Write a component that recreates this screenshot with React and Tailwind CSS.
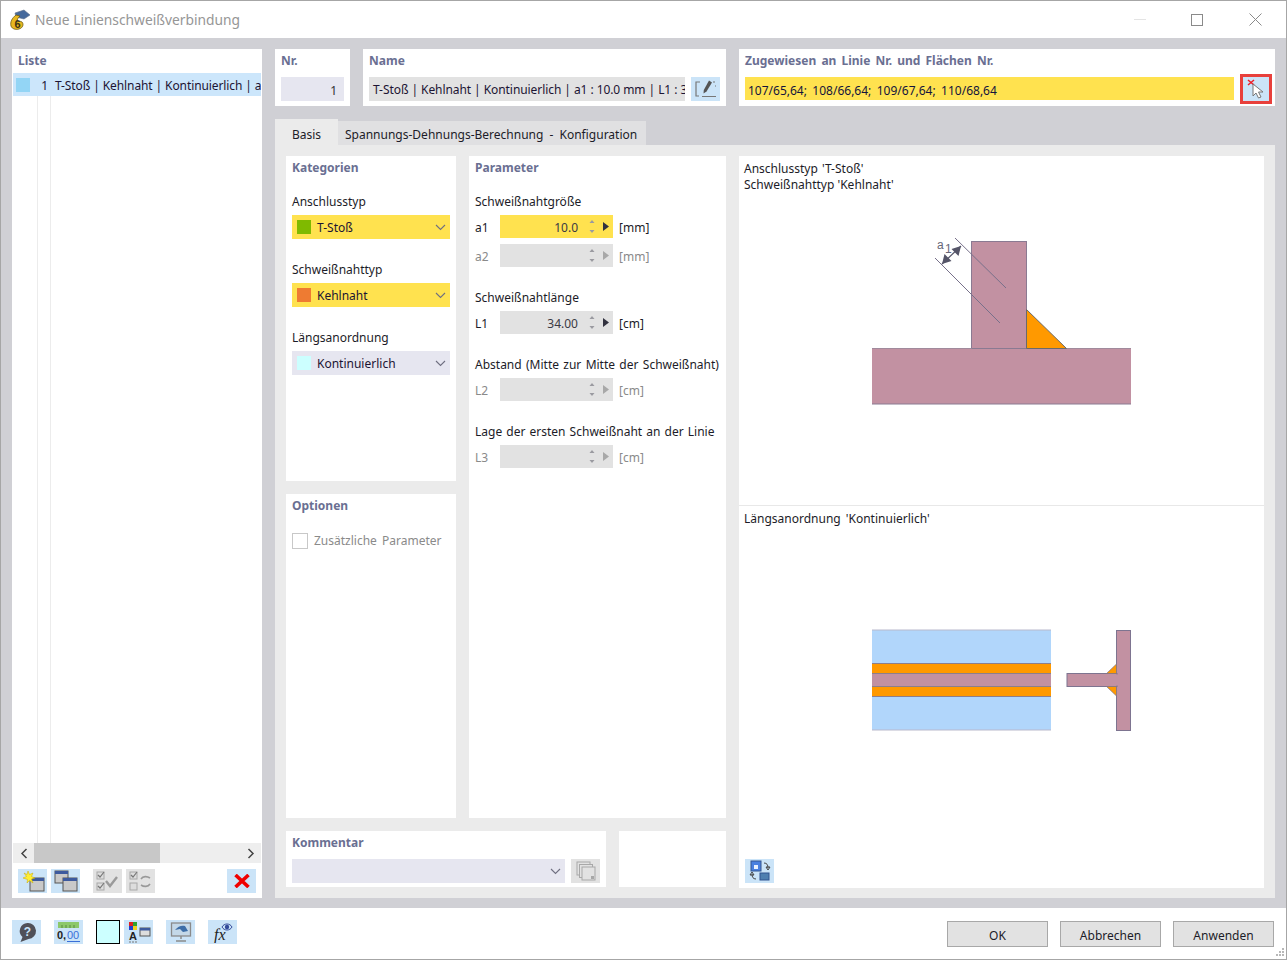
import React from 'react';

const font = { fontFamily: '"Noto Sans", sans-serif' };

function Chevron({ color = '#6f6f80' }) {
    return (
        <svg width="11" height="7" viewBox="0 0 11 7" className="shrink-0">
            <path d="M1 1l4.5 4.5L10 1" fill="none" stroke={color} strokeWidth="1.1" />
        </svg>
    );
}

function Heading({ children, className = '' }) {
    return <div className={`text-[12px] leading-[16px] font-bold text-[#6a6f92] ${className}`}>{children}</div>;
}

function IconButton({ bg = 'bg-[#cbe4f8]', className = '', children }) {
    return (
        <div className={`w-[29px] h-[24px] flex items-center justify-center shrink-0 ${bg} ${className}`}>
            {children}
        </div>
    );
}

function Select({ swatch, bg, children }) {
    return (
        <div className={`h-[24px] flex items-center pl-[5px] pr-[4px] ${bg}`}>
            <span className="w-[14px] h-[14px] shrink-0" style={{ background: swatch }} />
            <span className="ml-[6px] pt-[1px] flex-1 text-[12px] text-[#1c1433]">{children}</span>
            <Chevron />
        </div>
    );
}

function Spin({ label, value, unit, bg = 'bg-[#e2e2e2]', disabled = false }) {
    const col = disabled ? '#a8a8a8' : '#333340';
    return (
        <div className="h-[23px] flex items-center">
            <span className={`w-[25px] pt-[2px] text-[12px] ${disabled ? 'text-[#8a8a8a]' : 'text-[#1c1c28]'}`}>{label}</span>
            <div className={`w-[113px] h-[23px] flex items-center justify-end ${bg}`}>
                <span className="pt-[2px] text-[12px] text-[#3a3a44] mr-[10px]">{value}</span>
                <svg width="8" height="17" viewBox="0 0 8 17" className="mr-[7px]">
                    <path d="M4 2l2.500 3h-5z" fill="#9a9aa0" />
                    <path d="M4 15l2.500-3h-5z" fill="#9a9aa0" />
                </svg>
                <svg width="6" height="9" viewBox="0 0 6 9" className="mr-[4px]">
                    <path d="M0 0l6 4.500L0 9z" fill={col} />
                </svg>
            </div>
            <span className={`ml-[6px] pt-[2px] text-[12px] ${disabled ? 'text-[#8a8a8a]' : 'text-[#1c1c28]'}`}>{unit}</span>
        </div>
    );
}

function Window({ star, stack }) {
    return (
        <svg width="24" height="22" viewBox="0 0 24 22">
            {stack && (
                <g>
                    <rect x="1" y="1" width="13" height="12" fill="#c9c9c9" stroke="#555" />
                    <rect x="1" y="1" width="13" height="3" fill="#3d5a9e" />
                </g>
            )}
            <rect x="9" y="8" width="14" height="13" fill="#c9c9c9" stroke="#555" />
            <rect x="9" y="8" width="14" height="3" fill="#3d5a9e" />
            {star && <path d="M7 1l1.500 3.500L12 3l-1.500 3.500L14 8l-3.500 1L12 13 8.500 10.500 6 13l.5-3.500L2 8l3.500-1.500L3 3l3 1.500z" fill="#ffee33" stroke="#c8a800" strokeWidth=".5" />}
        </svg>
    );
}

function CheckGray({ second }) {
    return (
        <svg width="24" height="22" viewBox="0 0 24 22">
            <rect x="1" y="2" width="7" height="7" fill="#ddd" stroke="#a8a8a8" />
            <path d="M2 5l2 2 4-5" fill="none" stroke="#777" strokeWidth="1.200" />
            <rect x="1" y="13" width="7" height="7" fill="#ddd" stroke="#a8a8a8" />
            {second ? (
                <path d="M12 9c2-3 6-3 9-1M21 14c-2 3-6 3-9 1" fill="none" stroke="#999" strokeWidth="1.600" />
            ) : (
                <g>
                    <path d="M2 16l2 2 4-5" fill="none" stroke="#777" strokeWidth="1.200" />
                    <path d="M10 11l4 5 7-9" fill="none" stroke="#9a9a9a" strokeWidth="2.400" />
                </g>
            )}
        </svg>
    );
}

function LeftPanel() {
    return (
        <div className="w-[250px] h-[849px] bg-white flex flex-col pt-[4px]">
            <div className="px-[6px] h-[20px]"><Heading>Liste</Heading></div>
            <div className="mx-[1px] h-[23px] bg-[#cce6fb] flex items-center overflow-hidden whitespace-nowrap">
                <span className="ml-[3px] w-[14px] h-[14px] bg-[#93d5f5] shrink-0" />
                <span className="w-[18px] pt-[2px] text-right text-[12px] text-[#1c1433] shrink-0">1</span>
                <span className="ml-[7px] pt-[2px] text-[12px] tracking-[-0.1px] text-[#1c1433]">T-Stoß | Kehlnaht | Kontinuierlich | a1 : 10.0 mm</span>
            </div>
            <div className="flex-1 flex pl-[25px]">
                <div className="w-[14px] border-x border-[#ececec]" />
            </div>
            <div className="mx-[1px] h-[20px] bg-[#eeeeee] flex items-center">
                <div className="w-[21px] flex justify-center">
                    <svg width="8" height="11" viewBox="0 0 8 11"><path d="M6.500 1L2 5.500 6.500 10" fill="none" stroke="#444" strokeWidth="1.500" /></svg>
                </div>
                <div className="w-[126px] h-[20px] bg-[#c8c8c8]" />
                <div className="flex-1 flex justify-end pr-[6px]">
                    <svg width="8" height="11" viewBox="0 0 8 11"><path d="M1.500 1L6 5.500 1.500 10" fill="none" stroke="#444" strokeWidth="1.500" /></svg>
                </div>
            </div>
            <div className="h-[35px] flex items-start pt-[6px] pl-[6px]">
                <IconButton><Window star /></IconButton>
                <IconButton className="ml-[4px]"><Window stack /></IconButton>
                <IconButton bg="bg-[#e2e2e2]" className="ml-[13px]"><CheckGray /></IconButton>
                <IconButton bg="bg-[#e2e2e2]" className="ml-[4px]"><CheckGray second /></IconButton>
                <IconButton className="ml-[72px]">
                    <svg width="16" height="14" viewBox="0 0 16 14"><path d="M1.500 1l13 12M14.500 1l-13 12" stroke="#f00000" strokeWidth="3.600" /></svg>
                </IconButton>
            </div>
        </div>
    );
}

function TopRow() {
    return (
        <div className="h-[57px] flex gap-[13px]">
            <div className="w-[75px] bg-white px-[6px] pt-[4px]">
                <Heading>Nr.</Heading>
                <div className="mt-[8px] h-[24px] bg-[#e6e6f0] flex items-center justify-end pt-[3px] pr-[7px] text-[12px] text-[#333]">1</div>
            </div>
            <div className="w-[363px] bg-white px-[6px] pt-[4px]">
                <Heading>Name</Heading>
                <div className="mt-[8px] flex gap-[6px]">
                    <div className="w-[316px] h-[24px] bg-[#e2e2e2] flex items-center pt-[2px] pl-[4px] overflow-hidden whitespace-nowrap text-[12px] tracking-[-0.07px] text-[#1c1433]">
                        T-Stoß | Kehlnaht | Kontinuierlich | a1 : 10.0 mm | L1 : 34.00 cm
                    </div>
                    <IconButton>
                        <svg width="24" height="20" viewBox="0 0 24 20">
                            <path d="M6 3H2v14h3M8 17.500h14M21 3h-2M22 7h-1" fill="none" stroke="#777" strokeWidth="1.200" />
                            <path d="M15 1.500l3 2-5.500 9-3 2 .3-3.500z" fill="#555" />
                        </svg>
                    </IconButton>
                </div>
            </div>
            <div className="w-[536px] bg-white pl-[6px] pt-[4px] relative">
                <Heading className="[word-spacing:2px]">Zugewiesen an Linie Nr. und Flächen Nr.</Heading>
                <div className="mt-[8px] w-[489px] h-[23px] bg-[#ffe24f] flex items-center pt-[5px] pl-[3px] text-[12px] [word-spacing:2.3px] text-[#14143c]">
                    107/65,64; 108/66,64; 109/67,64; 110/68,64
                </div>
                <div className="absolute left-[501px] top-[25px] w-[32px] h-[30px] border-[3px] border-[#e8403c] bg-[#cbe4f8] flex items-center justify-center">
                    <svg width="18" height="22" viewBox="0 0 18 22">
                        <path d="M1 2l6 5M7 2L1 7" stroke="#ee1c25" strokeWidth="1.500" />
                        <path d="M6 6v12l3-3 2.500 5 2.500-1-2.500-5H16z" fill="#fff" stroke="#777" />
                    </svg>
                </div>
            </div>
        </div>
    );
}

function Kategorien() {
    return (
        <div className="h-[325px] bg-white px-[6px] pt-[4px]">
            <Heading>Kategorien</Heading>
            <div className="mt-[18px] text-[12px] leading-[16px] text-[#1c1c28]">Anschlusstyp</div>
            <div className="mt-[5px]"><Select swatch="#7fba00" bg="bg-[#ffe24f]">T-Stoß</Select></div>
            <div className="mt-[23px] text-[12px] leading-[16px] text-[#1c1c28]">Schweißnahttyp</div>
            <div className="mt-[5px]"><Select swatch="#ee7b32" bg="bg-[#ffe24f]">Kehlnaht</Select></div>
            <div className="mt-[23px] text-[12px] leading-[16px] text-[#1c1c28]">Längsanordnung</div>
            <div className="mt-[5px]"><Select swatch="#ccffff" bg="bg-[#e6e6f0]">Kontinuierlich</Select></div>
        </div>
    );
}

function Optionen() {
    return (
        <div className="h-[324px] bg-white px-[6px] pt-[4px]">
            <Heading>Optionen</Heading>
            <div className="mt-[17px] flex items-center">
                <span className="w-[16px] h-[16px] border border-[#c8c8c8] bg-white" />
                <span className="ml-[6px] pt-[1px] text-[12px] [word-spacing:2px] text-[#8a8a8a]">Zusätzliche Parameter</span>
            </div>
        </div>
    );
}

function Parameter() {
    return (
        <div className="w-[257px] h-[662px] bg-white px-[6px] pt-[4px]">
            <Heading>Parameter</Heading>
            <div className="mt-[18px] text-[12px] leading-[16px] text-[#1c1c28]">Schweißnahtgröße</div>
            <div className="mt-[5px]"><Spin label="a1" value="10.0" unit="[mm]" bg="bg-[#ffe24f]" /></div>
            <div className="mt-[6px]"><Spin label="a2" value="" unit="[mm]" disabled /></div>
            <div className="mt-[23px] text-[12px] leading-[16px] text-[#1c1c28]">Schweißnahtlänge</div>
            <div className="mt-[5px]"><Spin label="L1" value="34.00" unit="[cm]" /></div>
            <div className="mt-[23px] text-[12px] leading-[16px] text-[#1c1c28] whitespace-nowrap [word-spacing:1.2px]">Abstand (Mitte zur Mitte der Schweißnaht)</div>
            <div className="mt-[5px]"><Spin label="L2" value="" unit="[cm]" disabled /></div>
            <div className="mt-[23px] text-[12px] leading-[16px] text-[#1c1c28] [word-spacing:1px]">Lage der ersten Schweißnaht an der Linie</div>
            <div className="mt-[5px]"><Spin label="L3" value="" unit="[cm]" disabled /></div>
        </div>
    );
}

function TeeSection() {
    return (
        <svg width="265" height="173" viewBox="870 235 265 173" className="block ml-[131px] mt-[42px]">
            <rect x="971.500" y="241.500" width="55" height="107" fill="#c291a2" stroke="#8a7a92" />
            <rect x="872" y="348.500" width="259" height="55.500" fill="#c291a2" />
            <path d="M872 348.500h259" stroke="#a08a9c" />
            <path d="M872 404h259" stroke="#8a7a92" />
            <path d="M971.500 348.500h55" stroke="#8a7a92" />
            <path d="M1026.500 309.500l40 39h-40z" fill="#ff9900" stroke="#6a6a6a" />
            <path d="M955 238l51 50M935 258l65 65" stroke="#77708a" strokeWidth="1" />
            <path d="M961 246l-19 18" stroke="#555568" strokeWidth="1.200" />
            <path d="M961 246l-2.500 10-7-7zM942 264l2.500-10 7 7z" fill="#555568" />
            <text x="937" y="249" fontSize="12" fill="#666677" fontFamily="Liberation Sans, sans-serif">a</text>
            <text x="945" y="253" fontSize="12" fill="#666677" fontFamily="Liberation Sans, sans-serif">1</text>
        </svg>
    );
}

function LengthSection() {
    return (
        <svg width="265" height="106" viewBox="870 627 265 106" className="block ml-[131px] mt-[100px]">
            <rect x="872" y="630" width="179" height="100" fill="#b1d6fb" />
            <path d="M872 630h179M872 730h179" stroke="#b9b9cc" />
            <rect x="872" y="664" width="179" height="32" fill="#c291a2" />
            <rect x="872" y="663.500" width="179" height="10" fill="#ff9900" />
            <rect x="872" y="686.500" width="179" height="10" fill="#ff9900" />
            <path d="M872 663.500h179M872 673.500h179M872 686.500h179M872 696.500h179" stroke="#8c7f8c" />
            <rect x="1116.500" y="630.500" width="14" height="100" fill="#c291a2" stroke="#7d7490" />
            <rect x="1067" y="673.500" width="50" height="13" fill="#c291a2" stroke="#7d7490" />
            <rect x="1115" y="674.500" width="3" height="11" fill="#c291a2" />
            <path d="M1116.500 664v9.500h-10zM1116.500 696v-9.500h-10z" fill="#ff9900" stroke="#7d7490" strokeWidth=".7" />
        </svg>
    );
}

function Drawings() {
    return (
        <div className="w-[525px] h-[732px] bg-white flex flex-col">
            <div className="h-[350px] border-b border-[#e8e8e8] px-[5px] pt-[5px]">
                <div className="text-[12px] leading-[16px] text-[#1c1c28] [word-spacing:1px]">Anschlusstyp 'T-Stoß'</div>
                <div className="text-[12px] leading-[16px] text-[#1c1c28]">Schweißnahttyp 'Kehlnaht'</div>
                <div className="-mx-[5px]"><TeeSection /></div>
            </div>
            <div className="flex-1 px-[5px] pt-[5px] flex flex-col">
                <div className="text-[12px] leading-[16px] text-[#1c1c28] [word-spacing:2px]">Längsanordnung 'Kontinuierlich'</div>
                <div className="-mx-[5px]"><LengthSection /></div>
                <div className="mt-auto mb-[5px] ml-[1px]">
                    <IconButton>
                        <svg width="24" height="22" viewBox="0 0 24 22">
                            <rect x="3" y="1" width="10" height="10" fill="#4a80e0" stroke="#33558f" />
                            <rect x="6" y="5" width="4" height="4" fill="#e8f0ff" />
                            <rect x="12" y="13" width="9" height="7" fill="#4f7fb0" stroke="#33558f" />
                            <path d="M16 3c3 0 4 2 4 5M20 10l-2-3h4zM8 19c-3 0-4-2-4-5M4 12l-2 3h4z" fill="none" stroke="#444" strokeWidth="1" />
                        </svg>
                    </IconButton>
                </div>
            </div>
        </div>
    );
}

function Kommentar() {
    return (
        <div className="h-[57px] flex gap-[13px]">
            <div className="w-[320px] bg-white px-[6px] pt-[4px]">
                <Heading>Kommentar</Heading>
                <div className="mt-[8px] flex gap-[6px]">
                    <div className="w-[273px] h-[24px] bg-[#e6e6f0] flex items-center justify-end pr-[4px]"><Chevron /></div>
                    <IconButton bg="bg-[#e2e2e2]">
                        <svg width="20" height="20" viewBox="0 0 20 20">
                            <rect x="1" y="1" width="13" height="13" fill="none" stroke="#a8a8a8" />
                            <rect x="3.500" y="3.500" width="13" height="13" fill="#e2e2e2" stroke="#a8a8a8" />
                            <rect x="6" y="6" width="13" height="13" fill="#e2e2e2" stroke="#a8a8a8" />
                            <rect x="15" y="15" width="3" height="3" fill="#a8a8a8" />
                        </svg>
                    </IconButton>
                </div>
            </div>
            <div className="w-[107px] bg-white" />
        </div>
    );
}

function Footer() {
    return (
        <div className="flex-1 bg-white flex items-start relative pl-[11px] pt-[12px]">
            <IconButton>
                <svg width="22" height="22" viewBox="0 0 22 22">
                    <path d="M11.500 2a8 8 0 0 1 1 16l-8 3 2-5A8 8 0 0 1 11.500 2z" fill="#505058" />
                    <text x="11.500" y="15" fontSize="12" fontWeight="700" textAnchor="middle" fill="#cbe4f8" fontFamily="Liberation Sans, sans-serif">?</text>
                </svg>
            </IconButton>
            <IconButton className="ml-[13px]">
                <svg width="24" height="22" viewBox="0 0 24 22">
                    <rect x="1" y="1" width="21" height="6" fill="#8cc86a" />
                    <path d="M5 4v3M9 4v3M13 4v3M17 4v3" stroke="#5a8a40" />
                    <text x="0" y="18" fontSize="11" fontWeight="700" fill="#222" fontFamily="Liberation Sans, sans-serif">0,</text>
                    <text x="10" y="18" fontSize="11" fill="#3a6fd8" fontFamily="Liberation Sans, sans-serif">00</text>
                    <path d="M10 20.500h13" stroke="#3a6fd8" />
                </svg>
            </IconButton>
            <span className="ml-[13px] w-[24px] h-[24px] bg-[#ccffff] border border-black shrink-0" />
            <IconButton className="ml-[4px]">
                <svg width="24" height="22" viewBox="0 0 24 22">
                    <rect x="2" y="1" width="4" height="4" fill="#e02020" /><rect x="6" y="1" width="4" height="4" fill="#30a030" />
                    <rect x="2" y="5" width="4" height="4" fill="#2040d0" /><rect x="6" y="5" width="4" height="4" fill="#f0d020" />
                    <text x="2" y="19" fontSize="11" fontWeight="700" fill="#222" fontFamily="Liberation Sans, sans-serif">A</text>
                    <path d="M2 21h9" stroke="#777" strokeDasharray="2 1" />
                    <rect x="13" y="7" width="10" height="8" fill="#ddd" stroke="#555" />
                    <rect x="13" y="7" width="10" height="2.500" fill="#3d5a9e" />
                </svg>
            </IconButton>
            <IconButton className="ml-[13px]">
                <svg width="22" height="22" viewBox="0 0 22 22">
                    <rect x="1.500" y="2" width="19" height="13" fill="#c4d8e8" stroke="#8a8a8a" strokeWidth="1.300" />
                    <path d="M5 9c3-4 7-5 10-4l3 5-5 1-3-3z" fill="#3d6ea8" />
                    <path d="M11 15v3M6 20h10" stroke="#8a8a8a" strokeWidth="1.500" />
                </svg>
            </IconButton>
            <IconButton className="ml-[13px]">
                <svg width="24" height="22" viewBox="0 0 24 22">
                    <text x="3" y="19" fontSize="16" fontStyle="italic" fill="#222" fontFamily="Liberation Serif, serif">fx</text>
                    <path d="M11 6c2-4 8-4 10 0-2 4-8 4-10 0z" fill="#cbe4f8" stroke="#334a9a" />
                    <circle cx="16" cy="6" r="2.200" fill="#334a9a" />
                </svg>
            </IconButton>
            <div className="ml-auto mr-[12px] mt-[1px] flex gap-[12px]">
                {['OK', 'Abbrechen', 'Anwenden'].map((b) => (
                    <div key={b} className="w-[101px] h-[26px] bg-[#e2e2e2] border border-[#a8a8a8] flex items-center justify-center pt-[3px] text-[12px] text-[#1c1c28]">{b}</div>
                ))}
            </div>
            <svg width="10" height="10" viewBox="0 0 10 10" className="absolute right-[1px] bottom-[1px]">
                <path d="M7 0h2v2H7zM4 3h2v2H4zM7 3h2v2H7zM1 6h2v2H1zM4 6h2v2H4zM7 6h2v2H7z" fill="#b8b8b8" />
            </svg>
        </div>
    );
}

export default function App() {
    return (
        <div style={font} className="w-[1287px] h-[960px] flex flex-col bg-white border border-[#a6a6a6] overflow-hidden">
            {/* barra de titulo */}
            <div className="h-[37px] shrink-0 flex items-center pl-[8px]">
                <svg width="22" height="22" viewBox="0 0 22 22">
                    <path d="M6 4l9-3 6 5-6 4-8-2z" fill="#46699c" stroke="#5f6f88" strokeWidth=".6" />
                    <path d="M7 6c-4 3-6 7-5 11 1 3 5 4 8 3 4-1 5-5 3-7-2-1-3-1-5 0 0-3 1-4 3-6z" fill="#e8b820" stroke="#6d5a10" strokeWidth=".8" />
                    <text x="8.500" y="19" fontSize="11" fontWeight="700" textAnchor="middle" fill="#3a3210" fontFamily="Liberation Sans, sans-serif">6</text>
                </svg>
                <span className="ml-[4px] pt-[2px] text-[13.8px] text-[#969696]">Neue Linienschweißverbindung</span>
                <div className="ml-auto flex items-center">
                    <span className="w-[12px] h-px bg-[#e4e4e4] mr-[45px]" />
                    <span className="w-[12px] h-[12px] border border-[#8a8a8a] mr-[46px]" />
                    <svg width="13" height="13" viewBox="0 0 13 13" className="mr-[24px]"><path d="M.5.500l12 12M12.500.500l-12 12" stroke="#8a8a8a" /></svg>
                </div>
            </div>
            <div className="h-[870px] shrink-0 bg-[#d0d0d5] flex gap-[13px] pl-[11px] pt-[11px]">
                <LeftPanel />
                <div className="w-[1000px] flex flex-col">
                    <TopRow />
                    <div className="mt-[13px] h-[26px] flex items-end text-[12px] text-[#1c1c28]">
                        <div className="w-[63px] h-[26px] pt-[5px] bg-[#ebebeb] flex items-center justify-center">Basis</div>
                        <div className="w-[308px] h-[24px] pt-[3px] pl-[7px] bg-[#e0e0e2] flex items-center [word-spacing:3px]">Spannungs-Dehnungs-Berechnung - Konfiguration</div>
                    </div>
                    <div className="h-[753px] bg-[#ebebeb] p-[11px] flex gap-[13px]">
                        <div className="w-[440px] flex flex-col gap-[13px]">
                            <div className="h-[662px] flex gap-[13px]">
                                <div className="w-[170px] flex flex-col gap-[13px]">
                                    <Kategorien />
                                    <Optionen />
                                </div>
                                <Parameter />
                            </div>
                            <Kommentar />
                        </div>
                        <Drawings />
                    </div>
                </div>
            </div>
            <Footer />
        </div>
    );
}
